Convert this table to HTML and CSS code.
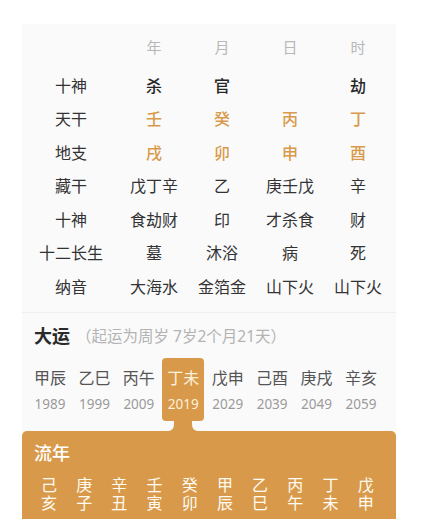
FILE: index.html
```html
<!DOCTYPE html>
<html lang="zh">
<head>
<meta charset="utf-8">
<link rel="stylesheet" href="styles.css">
</head>
<body>
<div class="card">
  <div class="pillars">
    <div class="cell head"></div>
    <div class="cell head">年</div>
    <div class="cell head">月</div>
    <div class="cell head">日</div>
    <div class="cell head">时</div>

    <div class="cell label">十神</div>
    <div class="cell strong">杀</div>
    <div class="cell strong">官</div>
    <div class="cell strong"></div>
    <div class="cell strong">劫</div>

    <div class="cell label">天干</div>
    <div class="cell gold">壬</div>
    <div class="cell gold">癸</div>
    <div class="cell gold">丙</div>
    <div class="cell gold">丁</div>

    <div class="cell label">地支</div>
    <div class="cell gold">戌</div>
    <div class="cell gold">卯</div>
    <div class="cell gold">申</div>
    <div class="cell gold">酉</div>

    <div class="cell label">藏干</div>
    <div class="cell">戊丁辛</div>
    <div class="cell">乙</div>
    <div class="cell">庚壬戊</div>
    <div class="cell">辛</div>

    <div class="cell label">十神</div>
    <div class="cell">食劫财</div>
    <div class="cell">印</div>
    <div class="cell">才杀食</div>
    <div class="cell">财</div>

    <div class="cell label">十二长生</div>
    <div class="cell">墓</div>
    <div class="cell">沐浴</div>
    <div class="cell">病</div>
    <div class="cell">死</div>

    <div class="cell label">纳音</div>
    <div class="cell">大海水</div>
    <div class="cell">金箔金</div>
    <div class="cell">山下火</div>
    <div class="cell">山下火</div>
  </div>

  <div class="dayun">
    <div class="dayun-title"><span class="t">大运</span><span class="sub">（起运为周岁 7岁2个月21天）</span></div>
    <div class="dayun-row">
      <div class="dy"><div class="dy-cell"><div class="gz">甲辰</div><div class="yr">1989</div></div></div>
      <div class="dy"><div class="dy-cell"><div class="gz">乙巳</div><div class="yr">1999</div></div></div>
      <div class="dy"><div class="dy-cell"><div class="gz">丙午</div><div class="yr">2009</div></div></div>
      <div class="dy"><div class="dy-cell active"><div class="gz">丁未</div><div class="yr">2019</div>
        <svg class="neck" width="30" height="11" viewBox="0 0 30 11"><path d="M6,0 L24,0 L24,4 Q24,11 30,11 L0,11 Q6,11 6,4 Z" fill="#d89a4a"/></svg>
      </div></div>
      <div class="dy"><div class="dy-cell"><div class="gz">戊申</div><div class="yr">2029</div></div></div>
      <div class="dy"><div class="dy-cell"><div class="gz">己酉</div><div class="yr">2039</div></div></div>
      <div class="dy"><div class="dy-cell"><div class="gz">庚戌</div><div class="yr">2049</div></div></div>
      <div class="dy"><div class="dy-cell"><div class="gz">辛亥</div><div class="yr">2059</div></div></div>
    </div>
  </div>

  <div class="liunian">
    <div class="ln-title">流年</div>
    <div class="ln-grid">
      <div class="ln"><span>己</span><span>亥</span></div>
      <div class="ln"><span>庚</span><span>子</span></div>
      <div class="ln"><span>辛</span><span>丑</span></div>
      <div class="ln"><span>壬</span><span>寅</span></div>
      <div class="ln"><span>癸</span><span>卯</span></div>
      <div class="ln"><span>甲</span><span>辰</span></div>
      <div class="ln"><span>乙</span><span>巳</span></div>
      <div class="ln"><span>丙</span><span>午</span></div>
      <div class="ln"><span>丁</span><span>未</span></div>
      <div class="ln"><span>戊</span><span>申</span></div>
    </div>
  </div>
</div>
</body>
</html>
```

FILE: styles.css
```css
* { box-sizing: border-box; }
html, body {
  margin: 0;
  padding: 0;
  background: #ffffff;
  font-family: "Noto Sans CJK SC", "Noto Sans", sans-serif;
}
body { padding-top: 24px; }

.card {
  margin-left: 22px;
  width: 374px;
  background: #fafafb;
}

.pillars {
  display: grid;
  grid-template-columns: 98px repeat(4, 68px);
  grid-template-rows: 44px repeat(7, 33.5px);
  padding-bottom: 9.5px;
}
.cell {
  display: flex;
  align-items: center;
  justify-content: center;
  font-size: 16px;
  color: #333333;
  white-space: nowrap;
}
.cell.head { color: #b8b8b8; font-size: 15px; }
.cell.label { color: #333333; }
.cell.strong { color: #262626; font-weight: 500; }
.cell.gold { color: #d89a4a; font-weight: 500; }

.dayun {
  border-top: 1px solid #efeff1;
  padding-top: 10px;
}
.dayun-title {
  display: flex;
  align-items: center;
  height: 24px;
  padding-left: 12px;
}
.dayun-title .t {
  font-size: 18px;
  font-weight: 700;
  color: #2a2a2a;
}
.dayun-title .sub {
  font-family: "Noto Sans", "Noto Sans CJK SC", sans-serif;
  font-size: 15.5px;
  color: #b3b3b3;
  margin-left: 6px;
}
.dayun-row {
  display: flex;
  padding-left: 5.8px;
  margin-top: 11px;
}
.dy { width: 44.43px; display: flex; justify-content: center; }
.dy-cell {
  position: relative;
  width: 42px;
  padding: 9px 0 8px;
  border-radius: 4px;
  text-align: center;
}
.dy-cell .gz {
  font-size: 16px;
  line-height: 20px;
  color: #555555;
  white-space: nowrap;
}
.dy-cell .yr {
  font-family: "Noto Sans", "Liberation Sans", sans-serif;
  font-size: 13.5px;
  line-height: 18px;
  color: #9a9a9a;
  margin-top: 8px;
}
.dy-cell.active { background: #d89a4a; }
.dy-cell.active .gz,
.dy-cell.active .yr { color: #fdf0dc; }
.neck {
  position: absolute;
  left: 50%;
  top: 100%;
  margin-left: -15px;
  margin-top: -1px;
  display: block;
}

.liunian {
  margin-top: 10px;
  background: #d89a4a;
  border-radius: 5px 5px 0 0;
  padding: 8.5px 0 12px;
  color: #ffffff;
}
.ln-title {
  font-size: 18px;
  line-height: 24px;
  padding-left: 12px;
  font-weight: 500;
}
.ln-grid {
  display: grid;
  grid-template-columns: repeat(10, 35.2px);
  padding-left: 9.4px;
  margin-top: 11px;
}
.ln {
  display: flex;
  flex-direction: column;
  align-items: center;
  font-size: 16px;
  color: #fffaf2;
}
.ln span {
  display: block;
  height: 18px;
  line-height: 18px;
}
```
